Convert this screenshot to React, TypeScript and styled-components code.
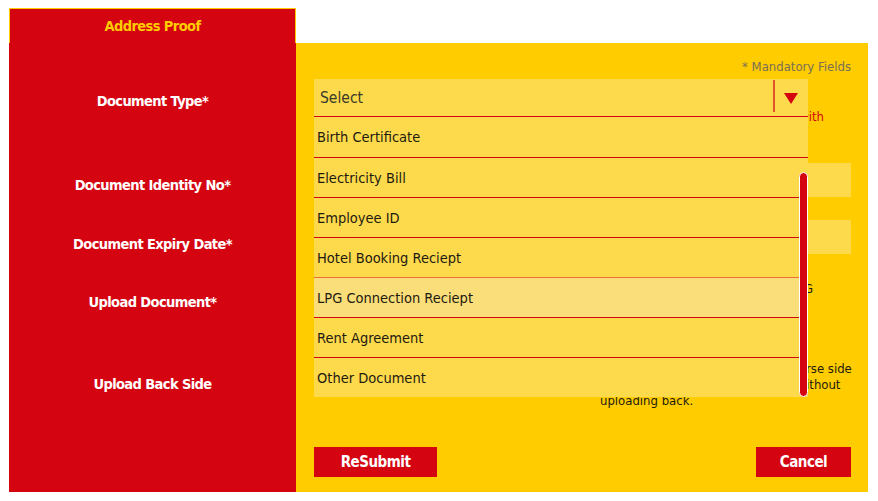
import styled, { createGlobalStyle } from "styled-components";

const red = "#d40511";
const yellow = "#ffcc00";
const fieldYellow = "#fdd94c";

const options = [
  "Birth Certificate",
  "Electricity Bill",
  "Employee ID",
  "Hotel Booking Reciept",
  "LPG Connection Reciept",
  "Rent Agreement",
  "Other Document",
];

const labels: { text: string; top: number }[] = [
  { text: "Document Type*", top: 48 },
  { text: "Document Identity No*", top: 64 },
  { text: "Document Expiry Date*", top: 39 },
  { text: "Upload Document*", top: 38 },
  { text: "Upload Back Side", top: 62 },
];

function App() {
  return (
    <>
      <GlobalStyle />
      <Page>
        <Tab>Address Proof</Tab>
        <Main>
          <LabelColumn>
            {labels.map((l) => (
              <Label key={l.text} $top={l.top}>
                {l.text}
              </Label>
            ))}
          </LabelColumn>
          <FormPanel>
            <Mandatory>* Mandatory Fields</Mandatory>
            <SelectWrap>
              <SelectBox>
                <SelectText>Select</SelectText>
                <Divider />
                <Caret viewBox="0 0 14 11">
                  <polygon points="0,0 14,0 7,11" fill={red} />
                </Caret>
              </SelectBox>
              <OptionList>
                {options.map((o) => (
                  <Option key={o} $active={o === "LPG Connection Reciept"}>
                    {o}
                  </Option>
                ))}
                <Thumb />
              </OptionList>
            </SelectWrap>
            <Note>Name and address on the document should match with</Note>
            <Field $top={40} />
            <Field $top={23} />
            <Hint>Allowed formats PDF, JPEG, PNG</Hint>
            <BackNote>
              Please upload the document's reverse side
              <br />
              if available, else submit the form without
              <br />
              uploading back.
            </BackNote>
            <Buttons>
              <Button>ReSubmit</Button>
              <Button $small>Cancel</Button>
            </Buttons>
          </FormPanel>
        </Main>
      </Page>
    </>
  );
}

export default App;

const GlobalStyle = createGlobalStyle`
  html, body {
    margin: 0;
    padding: 0;
    background: #ffffff;
    font-family: "DejaVu Sans Condensed", "Liberation Sans", sans-serif;
  }
  * {
    box-sizing: border-box;
  }
`;

const Page = styled.div`
  padding: 8px 0 0 9px;
  width: 868px;
`;

const Tab = styled.div`
  width: 287px;
  height: 35px;
  background: ${red};
  border: 1px solid ${yellow};
  border-bottom: none;
  color: ${yellow};
  font-size: 14.5px;
  font-weight: 700;
  letter-spacing: -0.6px;
  display: flex;
  align-items: center;
  justify-content: center;
`;

const Main = styled.div`
  display: flex;
  height: 449px;
`;

const LabelColumn = styled.div`
  flex: 0 0 287px;
  background: ${red};
  display: flex;
  flex-direction: column;
  align-items: center;
`;

const Label = styled.div<{ $top: number }>`
  margin-top: ${(p) => p.$top}px;
  height: 20px;
  line-height: 20px;
  color: #ffffff;
  font-size: 14.5px;
  font-weight: 700;
  letter-spacing: -0.6px;
  white-space: nowrap;
`;

const FormPanel = styled.div`
  flex: 1;
  min-width: 0;
  background: ${yellow};
  padding: 16px 17px 15px 18px;
  display: flex;
  flex-direction: column;
`;

const Mandatory = styled.div`
  text-align: right;
  line-height: 16px;
  font-size: 13px;
  color: #7a6f55;
`;

const SelectWrap = styled.div`
  position: relative;
  width: 494px;
  margin-top: 4px;
  z-index: 2;
`;

const SelectBox = styled.div`
  height: 38px;
  background: ${fieldYellow};
  border-bottom: 1px solid ${red};
  display: flex;
  align-items: center;
  padding-left: 6px;
`;

const SelectText = styled.span`
  flex: 1;
  font-size: 15.5px;
  color: #3a3a2a;
`;

const Divider = styled.span`
  align-self: flex-start;
  margin-top: 1px;
  width: 2px;
  height: 32px;
  background: #e2552a;
`;

const Caret = styled.svg`
  width: 14px;
  height: 11px;
  margin: 1px 10px 0 9px;
`;

const OptionList = styled.div`
  position: absolute;
  top: 100%;
  left: 0;
  width: 494px;
  background: ${fieldYellow};
`;

const Option = styled.div<{ $active?: boolean }>`
  height: 40px;
  border-top: 1px solid ${(p) => (p.$active ? "#ee6d34" : red)};
  background: ${(p) => (p.$active ? "#f9de7a" : fieldYellow)};
  padding-left: 3px;
  display: flex;
  align-items: center;
  font-size: 14.5px;
  color: #1e1a10;
  &:first-child {
    border-top: none;
  }
`;

const Thumb = styled.div`
  position: absolute;
  right: 0;
  top: 55px;
  width: 9px;
  height: 225px;
  background: ${red};
  border: 1px solid #ffffff;
  border-radius: 5px;
`;

const Note = styled.div`
  margin-top: -6px;
  line-height: 12px;
  font-size: 13px;
  color: ${red};
  text-align: right;
  padding-right: 27px;
  white-space: nowrap;
`;

const Field = styled.div<{ $top: number }>`
  margin-top: ${(p) => p.$top}px;
  height: 34px;
  background: ${fieldYellow};
`;

const Hint = styled.div`
  margin-top: 28px;
  line-height: 14px;
  font-size: 13px;
  color: #1e1a10;
  text-align: right;
  padding-right: 38px;
`;

const BackNote = styled.div`
  margin-top: 65px;
  margin-left: 286px;
  line-height: 16px;
  font-size: 13px;
  color: #1e1a10;
  white-space: nowrap;
`;

const Buttons = styled.div`
  margin-top: auto;
  display: flex;
  justify-content: space-between;
`;

const Button = styled.button<{ $small?: boolean }>`
  width: ${(p) => (p.$small ? 95 : 123)}px;
  height: 30px;
  border: none;
  background: ${red};
  color: #ffffff;
  font-family: inherit;
  font-size: 15px;
  font-weight: 700;
  letter-spacing: -0.5px;
  padding: 0;
`;
